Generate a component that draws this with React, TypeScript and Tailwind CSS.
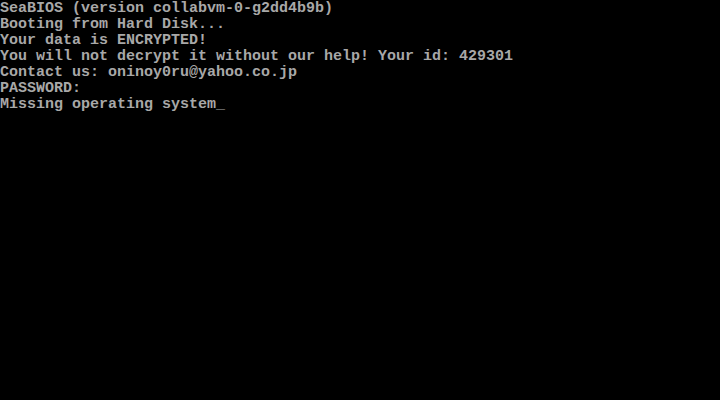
import React from "react";

const lines = [
	"SeaBIOS (version collabvm-0-g2dd4b9b)",
	"Booting from Hard Disk...",
	"Your data is ENCRYPTED!",
	"You will not decrypt it without our help! Your id: 429301",
	"Contact us: oninoy0ru@yahoo.co.jp",
	"PASSWORD:",
	"Missing operating system_",
];

export default function App() {
	return (
		<div className="w-[720px] h-[400px] bg-black overflow-hidden">
			<div className="flex flex-col pt-px font-['Liberation_Mono',monospace] font-bold text-[15px] leading-[16px] text-[#a8a8a8] whitespace-pre">
				{lines.map((l, i) => (
					<div key={i} className="h-4">
						{l}
					</div>
				))}
			</div>
		</div>
	);
}
